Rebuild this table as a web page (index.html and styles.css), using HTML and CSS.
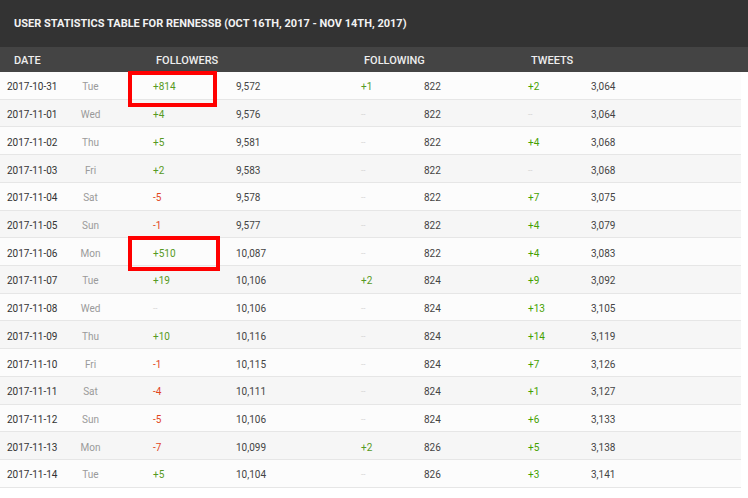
FILE: index.html
```html
<!DOCTYPE html>
<html>
<head>
<meta charset="utf-8">
<link rel="stylesheet" href="styles.css">
</head>
<body>
<div class="page">
  <div class="title">USER STATISTICS TABLE FOR RENNESSB (OCT 16TH, 2017 - NOV 14TH, 2017)</div>
  <div class="head">
    <span class="h-date">DATE</span>
    <span class="h-fol">FOLLOWERS</span>
    <span class="h-fing">FOLLOWING</span>
    <span class="h-tw">TWEETS</span>
  </div>
  <div class="rows">
    <div class="row"><span class="date">2017-10-31</span><span class="day">Tue</span><span class="up">+814</span><span class="num">9,572</span><span class="up">+1</span><span class="num">822</span><span class="up t">+2</span><span class="num">3,064</span></div>
    <div class="row"><span class="date">2017-11-01</span><span class="day">Wed</span><span class="up">+4</span><span class="num">9,576</span><span class="dash">--</span><span class="num">822</span><span class="dash">--</span><span class="num">3,064</span></div>
    <div class="row"><span class="date">2017-11-02</span><span class="day">Thu</span><span class="up">+5</span><span class="num">9,581</span><span class="dash">--</span><span class="num">822</span><span class="up t">+4</span><span class="num">3,068</span></div>
    <div class="row"><span class="date">2017-11-03</span><span class="day">Fri</span><span class="up">+2</span><span class="num">9,583</span><span class="dash">--</span><span class="num">822</span><span class="dash">--</span><span class="num">3,068</span></div>
    <div class="row"><span class="date">2017-11-04</span><span class="day">Sat</span><span class="down">-5</span><span class="num">9,578</span><span class="dash">--</span><span class="num">822</span><span class="up t">+7</span><span class="num">3,075</span></div>
    <div class="row"><span class="date">2017-11-05</span><span class="day">Sun</span><span class="down">-1</span><span class="num">9,577</span><span class="dash">--</span><span class="num">822</span><span class="up t">+4</span><span class="num">3,079</span></div>
    <div class="row"><span class="date">2017-11-06</span><span class="day">Mon</span><span class="up">+510</span><span class="num">10,087</span><span class="dash">--</span><span class="num">822</span><span class="up t">+4</span><span class="num">3,083</span></div>
    <div class="row"><span class="date">2017-11-07</span><span class="day">Tue</span><span class="up">+19</span><span class="num">10,106</span><span class="up">+2</span><span class="num">824</span><span class="up t">+9</span><span class="num">3,092</span></div>
    <div class="row"><span class="date">2017-11-08</span><span class="day">Wed</span><span class="dash">--</span><span class="num">10,106</span><span class="dash">--</span><span class="num">824</span><span class="up t">+13</span><span class="num">3,105</span></div>
    <div class="row"><span class="date">2017-11-09</span><span class="day">Thu</span><span class="up">+10</span><span class="num">10,116</span><span class="dash">--</span><span class="num">824</span><span class="up t">+14</span><span class="num">3,119</span></div>
    <div class="row"><span class="date">2017-11-10</span><span class="day">Fri</span><span class="down">-1</span><span class="num">10,115</span><span class="dash">--</span><span class="num">824</span><span class="up t">+7</span><span class="num">3,126</span></div>
    <div class="row"><span class="date">2017-11-11</span><span class="day">Sat</span><span class="down">-4</span><span class="num">10,111</span><span class="dash">--</span><span class="num">824</span><span class="up t">+1</span><span class="num">3,127</span></div>
    <div class="row"><span class="date">2017-11-12</span><span class="day">Sun</span><span class="down">-5</span><span class="num">10,106</span><span class="dash">--</span><span class="num">824</span><span class="up t">+6</span><span class="num">3,133</span></div>
    <div class="row"><span class="date">2017-11-13</span><span class="day">Mon</span><span class="down">-7</span><span class="num">10,099</span><span class="up">+2</span><span class="num">826</span><span class="up t">+5</span><span class="num">3,138</span></div>
    <div class="row"><span class="date">2017-11-14</span><span class="day">Tue</span><span class="up">+5</span><span class="num">10,104</span><span class="dash">--</span><span class="num">826</span><span class="up t">+3</span><span class="num">3,141</span></div>
  </div>
  <div class="mark mark-1"></div>
  <div class="mark mark-2"></div>
</div>
</body>
</html>
```

FILE: styles.css
```css
html, body {
  margin: 0;
  padding: 0;
  background: #ffffff;
}
body {
  width: 748px;
  height: 498px;
  overflow: hidden;
  font-family: Roboto, "Liberation Sans", sans-serif;
}
.page {
  position: relative;
}
.title {
  height: 47px;
  background: #333333;
  color: #f2f2f2;
  font-size: 11px;
  font-weight: 700;
  padding-left: 14px;
  display: flex;
  align-items: center;
  box-sizing: border-box;
  padding-bottom: 1px;
}
.head {
  height: 25px;
  background: #444444;
  color: #eeeeee;
  font-size: 11px;
  font-weight: 500;
  display: grid;
  grid-template-columns: 142px 208px 167px 1fr;
  padding-left: 14px;
  align-items: center;
  box-sizing: border-box;
  padding-top: 1px;
}
.rows {
  width: 741px;
}
.row {
  height: 27.73px;
  box-sizing: border-box;
  border-bottom: 1px solid #e6e6e6;
  display: grid;
  grid-template-columns: 63px 41px 42px 83px 125px 63px 104px 63px 1fr;
  align-items: center;
  padding-left: 7px;
  padding-top: 3px;
  font-size: 10px;
  color: #444444;
}
.row:nth-child(odd) { background: #fcfcfc; }
.row:nth-child(even) { background: #f6f6f6; }
.row > span:nth-child(1) { grid-column: 1; }
.row > span:nth-child(2) { grid-column: 2; }
.row > span:nth-child(3) { grid-column: 4; }
.row > span:nth-child(4) { grid-column: 5; }
.row > span:nth-child(5) { grid-column: 6; }
.row > span:nth-child(6) { grid-column: 7; }
.row > span:nth-child(7) { grid-column: 8; }
.row > span:nth-child(8) { grid-column: 9; }
.date { color: #333333; }
.day { color: #9a9a9a; text-align: center; }
.up { color: #569a22; }
.up.t { color: #45a100; }
.down { color: #e2461c; }
.dash { color: #cccccc; font-size: 8px; }
.mark {
  position: absolute;
  border: 4.5px solid #ff0000;
  box-sizing: border-box;
}
.mark-1 { left: 128px; top: 71px; width: 89px; height: 36px; }
.mark-2 { left: 128px; top: 236px; width: 92px; height: 35px; }
```
